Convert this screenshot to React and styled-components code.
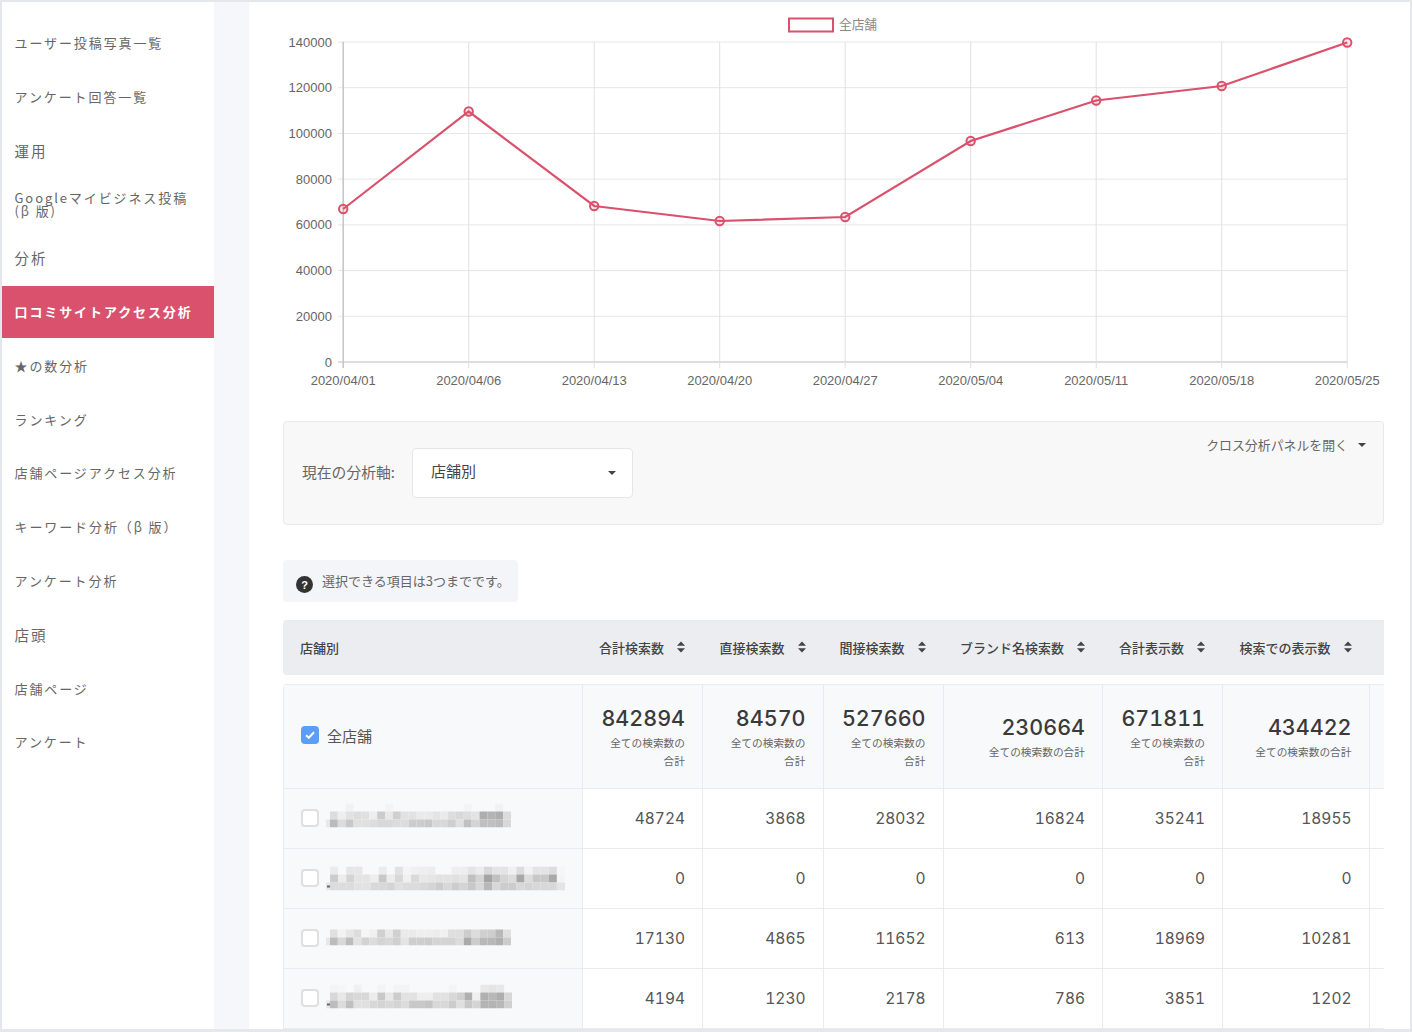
import React from 'react';
import styled, { createGlobalStyle } from 'styled-components';

const JP = '"Noto Sans CJK JP", sans-serif';
const NUM = 'Inter, "Noto Sans CJK JP", sans-serif';
const RED = '#d9516c';
const LINE = '#e9ebef';
const COLUMNS = '299px 120px 120.5px 120px 159.5px 120px 146.5px 15.5px';

const GlobalStyle = createGlobalStyle`
    html, body {
        margin: 0;
        padding: 0;
        background: #fff;
    }
    * {
        box-sizing: border-box;
    }
`;

const Page = styled.div`
    display: flex;
    width: 1412px;
    height: 1032px;
    overflow: hidden;
    background: #fff;
    border: 2px solid #e4e8ec;
    border-bottom-width: 3px;
    font-family: ${JP};
`;

const Sidebar = styled.nav`
    display: flex;
    flex-direction: column;
    gap: 1.8px;
    flex: 0 0 212px;
    padding-top: 15px;
`;

const NavItem = styled.a`
    display: flex;
    align-items: center;
    height: 52px;
    padding: 0 18px 1px 12.5px;
    color: ${p => (p.$active ? '#fff' : '#666')};
    background: ${p => (p.$active ? RED : 'transparent')};
    font-size: ${p => (p.$top ? '14.5px' : '13px')};
    font-weight: ${p => (p.$active ? 700 : 400)};
    letter-spacing: 1.9px;
    line-height: 13px;
`;

const Gutter = styled.div`
    flex: 0 0 35px;
    background: #f6f7fa;
`;

const Main = styled.main`
    flex: 1;
    min-width: 0;
    padding: 0 26px 0 34px;
`;

const Chart = styled.svg`
    display: block;
    width: 1101px;
    height: 398px;
`;

const Tick = styled.text`
    font-family: "Liberation Sans", sans-serif;
    font-size: 13px;
    fill: #666;
    text-anchor: ${p => p.$anchor};
`;

const LegendText = styled.text`
    font-family: ${JP};
    font-size: 12.7px;
    fill: #888;
`;

const Panel = styled.section`
    position: relative;
    display: flex;
    align-items: center;
    gap: 17px;
    height: 104px;
    margin-top: 21px;
    padding: 0 18px;
    background: #f8f8f8;
    border: 1px solid #e9e9e9;
    border-radius: 4px;
`;

const PanelLabel = styled.span`
    margin-bottom: 4px;
    color: #666;
    font-size: 14.8px;
`;

const Select = styled.div`
    display: flex;
    align-items: center;
    justify-content: space-between;
    width: 221px;
    height: 50px;
    padding: 0 16px 0 18px;
    background: #fff;
    border: 1px solid #e6e6e6;
    border-radius: 4px;
    color: #444;
    font-size: 15px;
`;

const SelectValue = styled.span`
    margin-bottom: 5px;
`;

const Caret = styled.i`
    display: block;
    width: 0;
    height: 0;
    border-left: 4.5px solid transparent;
    border-right: 4.5px solid transparent;
    border-top: 4.5px solid #444;
`;

const CrossToggle = styled.div`
    position: absolute;
    top: 13px;
    right: 17px;
    display: flex;
    align-items: center;
    gap: 10px;
    color: #666;
    font-size: 12.9px;
`;

const Hint = styled.div`
    display: flex;
    align-items: center;
    gap: 9px;
    width: 235px;
    height: 42px;
    margin-top: 35px;
    padding: 0 13px;
    background: #f4f5f9;
    border-radius: 4px;
    color: #666;
    font-size: 13px;
`;

const HintIcon = styled.span`
    display: flex;
    align-items: center;
    justify-content: center;
    flex: 0 0 17px;
    height: 17px;
    margin-top: 7px;
    background: #333;
    border-radius: 50%;
    color: #fff;
    font-family: "Liberation Sans", sans-serif;
    font-size: 11px;
    font-weight: 700;
`;

const HintText = styled.span`
    margin-top: -1px;
    white-space: nowrap;
`;

const TableHead = styled.div`
    display: grid;
    grid-template-columns: ${COLUMNS};
    height: 55px;
    margin-top: 18px;
    background: #ebedf1;
    border-radius: 4px 0 0 4px;
    color: #444;
    font-size: 13px;
    font-weight: 500;
`;

const HeadCell = styled.div`
    display: flex;
    align-items: center;
    justify-content: ${p => (p.$first ? 'flex-start' : 'flex-end')};
    gap: 13px;
    padding: 0 17px 1px;
    white-space: nowrap;
`;

const SortIcon = styled.svg`
    flex: 0 0 8px;
    width: 8px;
    height: 12px;
    fill: #444;
`;

const Table = styled.div`
    margin-top: 9px;
    border-top: 1px solid ${LINE};
    border-top-left-radius: 4px;
    overflow: hidden;
`;

const Row = styled.div`
    display: grid;
    grid-template-columns: ${COLUMNS};
    height: ${p => (p.$total ? '104px' : '60px')};
    border-bottom: 1px solid ${LINE};
    background: ${p => (p.$total ? '#f8f9fb' : '#fff')};
`;

const NameCell = styled.div`
    display: flex;
    align-items: center;
    gap: ${p => (p.$total ? '8px' : '7px')};
    padding: 0 0 ${p => (p.$total ? '3px' : '1px')} 17px;
    background: #f8f9fb;
    border-left: 1px solid ${LINE};
    color: #555;
    font-size: 15px;
`;

const Checkbox = styled.span`
    display: flex;
    align-items: center;
    justify-content: center;
    flex: 0 0 18px;
    height: 18px;
    background: ${p => (p.$checked ? '#5b9ef7' : '#fff')};
    border: ${p => (p.$checked ? '0' : '2px solid #dfdfdf')};
    border-radius: 4px;
`;

const Mosaic = styled.svg`
    display: block;
    flex: none;
    filter: blur(0.7px);
    transform: translateY(${p => -p.$lift}px);
`;

const NumCell = styled.div`
    display: flex;
    align-items: center;
    justify-content: flex-end;
    padding: 0 17px 1px;
    border-left: 1px solid ${LINE};
    color: #555;
    font-family: ${NUM};
    font-size: 15.5px;
    font-variant-numeric: tabular-nums;
`;

const TotalCell = styled.div`
    display: flex;
    flex-direction: column;
    justify-content: center;
    padding: 0 17px 0 20px;
    border-left: 1px solid ${LINE};
    text-align: right;
`;

const TotalValue = styled.div`
    margin-left: -4px;
    color: #3a3a3a;
    font-family: ${NUM};
    font-size: 21.5px;
    font-weight: 500;
    font-variant-numeric: tabular-nums;
    line-height: 30px;
`;

const TotalCaption = styled.div`
    color: #666;
    font-size: 10.7px;
    line-height: 18px;
    margin-top: 1px;
`;

const nav = [
    { label: 'ユーザー投稿写真一覧' },
    { label: 'アンケート回答一覧' },
    { label: '運用', top: true },
    { label: 'Googleマイビジネス投稿 (β 版)' },
    { label: '分析', top: true },
    { label: '口コミサイトアクセス分析', active: true },
    { label: '★の数分析' },
    { label: 'ランキング' },
    { label: '店舗ページアクセス分析' },
    { label: 'キーワード分析（β 版）' },
    { label: 'アンケート分析' },
    { label: '店頭', top: true },
    { label: '店舗ページ' },
    { label: 'アンケート' },
];

const yTicks = [
    ['140000', 42], ['120000', 87.7], ['100000', 133.4], ['80000', 179.1],
    ['60000', 224.9], ['40000', 270.6], ['20000', 316.3], ['0', 362],
];
const xLabels = [
    '2020/04/01', '2020/04/06', '2020/04/13', '2020/04/20', '2020/04/27',
    '2020/05/04', '2020/05/11', '2020/05/18', '2020/05/25',
];
const pointY = [209, 111.5, 206, 221, 217, 141, 100.5, 86, 42.5];
const xAt = i => 343.2 + i * 125.5;

const headers = ['合計検索数', '直接検索数', '間接検索数', 'ブランド名検索数', '合計表示数', '検索での表示数'];
const totals = ['842894', '84570', '527660', '230664', '671811', '434422'];

const rows = [
    {
        values: [48724, 3868, 28032, 16824, 35241, 18955],
        lift: 2.5,
        width: 185,
        mosaic: [
            '.. .. f2 .. .. .. .. f4 .. .. .. .. .. .. .. .. .. f4 .. .. .. f2 ..',
            'dd ee e2 dd e0 ee cc e8 cf e2 e2 ea ea e4 ea dd d8 dd e4 ae b4 ae dc',
            'bb dc c8 e0 e0 dc d8 d8 dc dc cc cc c8 d8 d8 ce e0 c0 d4 c0 c0 bc d8',
        ],
    },
    {
        values: [0, 0, 0, 0, 0, 0],
        lift: -0.5,
        width: 239,
        dot: true,
        mosaic: [
            'eb .. e6 e6 .. .. ec .. e2 f4 f0 ee ec .. .. ee ee e4 ec d8 e4 e4 f0 dc f2 e4 e4 dc f6',
            'cc ec d4 e4 e4 ee c8 ec d8 f0 da e8 e6 e2 e2 e0 e4 c0 d4 a4 c0 d4 dc a8 dc c8 c8 a8 f4',
            'dc dc dc e2 e2 d8 d8 d4 e0 dc dc d8 d4 cc d8 cc d4 c8 d8 b8 d8 cc cc d8 d4 d8 d8 d8 e4',
        ],
    },
    {
        values: [17130, 4865, 11652, 613, 18969, 10281],
        lift: 4.5,
        width: 185,
        mosaic: [
            '.. .. .. .. .. .. .. .. .. .. .. .. .. .. .. .. .. .. .. .. .. .. ..',
            'e0 f2 e6 dc f6 f0 d0 e8 d0 ea ea ee ee ec f0 de de cc dc d0 ce b8 e0',
            'bc d8 bc e2 d2 dc d4 d8 d0 e4 ce ce cc d4 d4 d4 dc aa cc b8 b8 b0 cc',
        ],
    },
    {
        values: [4194, 1230, 2178, 786, 3851, 1202],
        lift: 1.5,
        width: 186,
        dot: true,
        mosaic: [
            'f4 f6 .. f0 .. .. f4 .. f4 f4 .. .. .. .. .. f4 .. .. .. e8 e4 e8 ..',
            'd8 e8 d4 d8 d8 ec c8 e8 cc e2 e2 ee ee e2 e2 d8 d0 b0 f0 b0 b8 ae d8',
            'bc dc c0 e0 e0 d8 d4 d8 d4 dc c8 c8 c4 d8 d8 cc e0 c8 d4 b4 b4 b8 d0',
        ],
    },
];

function Sort() {
    return (
        <SortIcon viewBox="0 0 8 12">
            <path d="M4 0.5 L8 4.8 H0 Z" />
            <path d="M4 11.5 L8 7.2 H0 Z" />
        </SortIcon>
    );
}

function BlurredName({ mosaic, dot, lift, width }) {
    const cells = mosaic.map(r => r.split(' '));
    const viewWidth = Math.max(...cells.map(r => r.length)) * 8 + 4;
    return (
        <Mosaic width={width} height="24" viewBox={`0 0 ${viewWidth} 24`} preserveAspectRatio="none" $lift={lift}>
            <rect x="0" y="16" width="4" height="8" fill="#e8e8e8" />
            {cells.map((r, y) =>
                r.map((c, x) =>
                    c === '..' ? null : (
                        <rect key={`${x}-${y}`} x={x * 8 + 4} y={y * 8} width="8" height="8" fill={`#${c}${c}${c}`} />
                    )
                )
            )}
            {dot && <rect x="1" y="19" width="3" height="2" fill="#666" />}
        </Mosaic>
    );
}

function LineChart() {
    const points = pointY.map((y, i) => `${xAt(i)},${y}`).join(' ');
    return (
        <Chart viewBox="283 2 1101 398">
            <rect x="789" y="18.5" width="44" height="13" fill="#fff" stroke={RED} strokeWidth="2" />
            <LegendText x="839" y="28.5">全店舗</LegendText>

            {yTicks.map(([label, y]) => (
                <g key={label}>
                    <line x1="338" x2="1347.2" y1={y} y2={y} stroke={label === '0' ? '#bbb' : '#e6e6e6'} />
                    <Tick x="332" y={y + 4.5} $anchor="end">{label}</Tick>
                </g>
            ))}
            {xLabels.map((label, i) => (
                <g key={label}>
                    <line
                        x1={xAt(i)}
                        x2={xAt(i)}
                        y1="42"
                        y2="368"
                        stroke={i === 0 ? '#c4c4c4' : '#e0e0e0'}
                        strokeWidth={i === 0 ? 1.5 : 1}
                    />
                    <Tick x={xAt(i)} y="385" $anchor="middle">{label}</Tick>
                </g>
            ))}

            <polyline points={points} fill="none" stroke={RED} strokeWidth="2.2" />
            {pointY.map((y, i) => (
                <circle key={i} cx={xAt(i)} cy={y} r="4.2" fill="rgba(217,81,108,0.12)" stroke={RED} strokeWidth="2" />
            ))}
        </Chart>
    );
}

function App() {
    return (
        <Page>
            <GlobalStyle />
            <Sidebar>
                {nav.map(item => (
                    <NavItem key={item.label} $top={item.top} $active={item.active}>
                        <span>{item.label}</span>
                    </NavItem>
                ))}
            </Sidebar>
            <Gutter />
            <Main>
                <LineChart />

                <Panel>
                    <PanelLabel>現在の分析軸:</PanelLabel>
                    <Select>
                        <SelectValue>店舗別</SelectValue>
                        <Caret />
                    </Select>
                    <CrossToggle>
                        クロス分析パネルを開く
                        <Caret />
                    </CrossToggle>
                </Panel>

                <Hint>
                    <HintIcon>?</HintIcon>
                    <HintText>選択できる項目は3つまでです。</HintText>
                </Hint>

                <TableHead>
                    <HeadCell $first>店舗別</HeadCell>
                    {headers.map(h => (
                        <HeadCell key={h}>
                            {h}
                            <Sort />
                        </HeadCell>
                    ))}
                </TableHead>

                <Table>
                    <Row $total>
                        <NameCell $total>
                            <Checkbox $checked>
                                <svg width="10" height="8" viewBox="0 0 10 8">
                                    <path d="M1 4.2 L3.8 6.8 L9 1.2" fill="none" stroke="#fff" strokeWidth="2" />
                                </svg>
                            </Checkbox>
                            全店舗
                        </NameCell>
                        {totals.map(v => (
                            <TotalCell key={v}>
                                <TotalValue>{v}</TotalValue>
                                <TotalCaption>全ての検索数の合計</TotalCaption>
                            </TotalCell>
                        ))}
                        <TotalCell />
                    </Row>
                    {rows.map((row, i) => (
                        <Row key={i}>
                            <NameCell>
                                <Checkbox />
                                <BlurredName mosaic={row.mosaic} dot={row.dot} lift={row.lift} width={row.width} />
                            </NameCell>
                            {row.values.map((v, j) => (
                                <NumCell key={j}>{v}</NumCell>
                            ))}
                            <NumCell />
                        </Row>
                    ))}
                </Table>
            </Main>
        </Page>
    );
}

export default App;
